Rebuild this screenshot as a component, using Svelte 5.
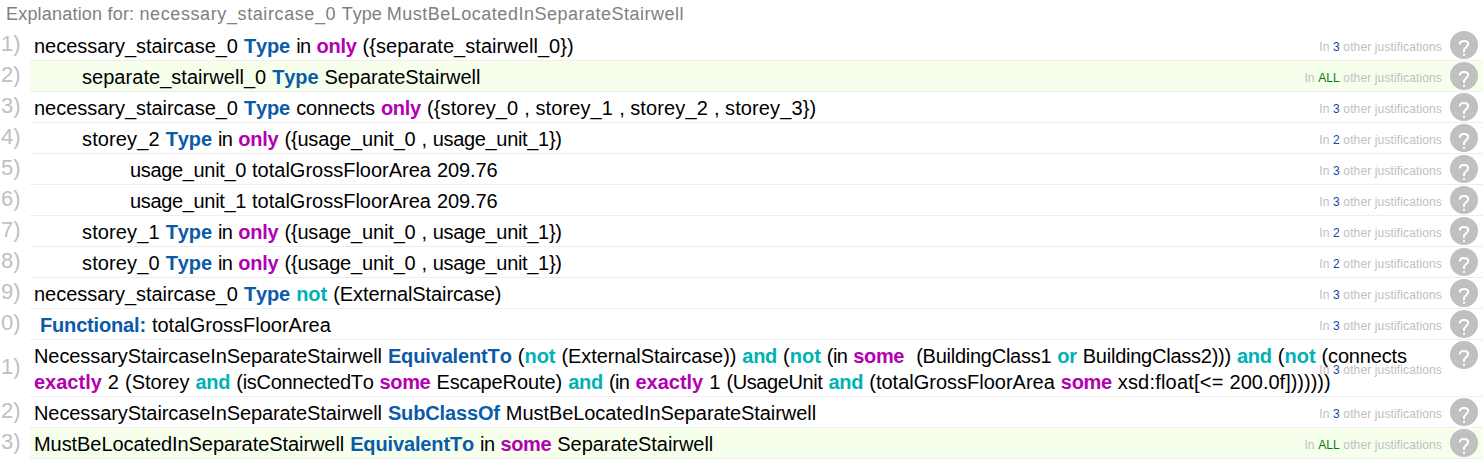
<script>
  const rows = [
    { n: '1)', indent: 0, lines: ['necessary_staircase_0 Type in only ({separate_stairwell_0})'], count: '3' },
    { n: '2)', indent: 1, lines: ['separate_stairwell_0 Type SeparateStairwell'], count: 'ALL' },
    { n: '3)', indent: 0, lines: ['necessary_staircase_0 Type connects only ({storey_0 , storey_1 , storey_2 , storey_3})'], count: '3' },
    { n: '4)', indent: 1, lines: ['storey_2 Type in only ({usage_unit_0 , usage_unit_1})'], count: '2' },
    { n: '5)', indent: 2, lines: ['usage_unit_0 totalGrossFloorArea 209.76'], count: '3' },
    { n: '6)', indent: 2, lines: ['usage_unit_1 totalGrossFloorArea 209.76'], count: '3' },
    { n: '7)', indent: 1, lines: ['storey_1 Type in only ({usage_unit_0 , usage_unit_1})'], count: '2' },
    { n: '8)', indent: 1, lines: ['storey_0 Type in only ({usage_unit_0 , usage_unit_1})'], count: '2' },
    { n: '9)', indent: 0, lines: ['necessary_staircase_0 Type not (ExternalStaircase)'], count: '3' },
    { n: '0)', indent: 0, lines: [' Functional: totalGrossFloorArea'], count: '3' },
    {
      n: '1)',
      indent: 0,
      lines: [
        'NecessaryStaircaseInSeparateStairwell EquivalentTo (not (ExternalStaircase)) and (not (in some  (BuildingClass1 or BuildingClass2))) and (not (connects',
        'exactly 2 (Storey and (isConnectedTo some EscapeRoute) and (in exactly 1 (UsageUnit and (totalGrossFloorArea some xsd:float[<= 200.0f]))))))'
      ],
      count: '3'
    },
    { n: '2)', indent: 0, lines: ['NecessaryStaircaseInSeparateStairwell SubClassOf MustBeLocatedInSeparateStairwell'], count: '3' },
    { n: '3)', indent: 0, lines: ['MustBeLocatedInSeparateStairwell EquivalentTo in some SeparateStairwell'], count: 'ALL' }
  ];

  const kinds = {
    Type: 'axiom', EquivalentTo: 'axiom', SubClassOf: 'axiom', 'Functional:': 'axiom',
    only: 'restriction', some: 'restriction', exactly: 'restriction',
    not: 'logic', and: 'logic', or: 'logic'
  };

  // Per-word tracking in px, keyed by the exact word or by the word without its brackets and index.
  const tracking = {
    necessary_staircase: -0.03, separate_stairwell: 0.04, storey: 0.13, usage_unit: -0.34, ',': -0.5,
    '({usage_unit_0': -0.16, 'usage_unit_1})': -0.32,
    Type: -0.12, in: -0.6, only: -0.27, connects: -0.16, some: -0.35, and: -0.25, or: -0.3,
    '209.76': -0.1, ExternalStaircase: -0.1, 'Functional:': -0.17, EquivalentTo: -0.14, SubClassOf: -0.14,
    NecessaryStaircaseInSeparateStairwell: -0.092, MustBeLocatedInSeparateStairwell: -0.07,
    SeparateStairwell: -0.05, BuildingClass1: -0.25, BuildingClass2: -0.24, isConnectedTo: -0.28,
    EscapeRoute: -0.08, UsageUnit: -0.4, 'xsd:float[<=': 0.2
  };
  const keyword = /(\b(?:Type|EquivalentTo|SubClassOf|only|some|exactly|not|and|or)\b|Functional:|\s+)/;
  const tokens = (line) =>
    line.split(keyword).filter(Boolean).map((text) => ({
      text,
      kind: kinds[text] ?? 'plain',
      track: tracking[text] ?? tracking[text.replace(/[(){}]|_\d/g, '')] ?? 0
    }));
</script>

<main>
  <h1><span class="lead">Explanation for:{' '}</span><span class="subject">necessary_staircase_0{' '}</span><span class="rel">Type{' '}</span><span class="object">MustBeLocatedInSeparateStairwell</span></h1>
  <ol>
    {#each rows as row}
      <li class:tall={row.lines.length > 1}>
        <span class="num">{row.n}</span>
        <div class="axiom-row indent-{row.indent}" class:all={row.count === 'ALL'}>
          <div class="text">
            {#each row.lines as line}
              <div class="line">{#each tokens(line) as t}<span class={t.kind} style:letter-spacing="{t.track}px">{t.text}</span>{/each}</div>
            {/each}
          </div>
          <div class="note">In <b class:every={row.count === 'ALL'}>{row.count}</b> other justifications</div>
          <svg class="help" viewBox="0 0 28 28" width="28" height="28" aria-hidden="true">
            <circle cx="14" cy="14" r="14" />
            <path d="M9.9 13.4V12.8C9.9 10.8 11.5 9.9 14 9.9S18.2 10.9 18.2 13C18.2 16.2 14 16.4 14 19.6V21" />
            <rect x="13" y="22.8" width="2" height="2" />
          </svg>
        </div>
      </li>
    {/each}
  </ol>
</main>

<style>
  :global(body) { background: #fff; overflow: hidden; }
  main { font-family: "Liberation Sans", Arial, sans-serif; font-kerning: none; height: 465px; overflow: hidden; }
  h1 { margin: 0; padding-left: 6px; height: 30px; font-size: 18px; line-height: 28px; font-weight: 400; color: #808080; white-space: pre; }
  .lead { letter-spacing: 0.2px; }
  .subject { letter-spacing: 0.6px; }
  .rel { letter-spacing: 0; }
  .object { letter-spacing: 0.5px; }
  ol { list-style: none; margin: 0; padding: 0; }
  li { display: grid; grid-template-columns: 30px 1fr; height: 31px; }
  li.tall { height: 57px; }
  .num { align-self: center; padding-left: 1px; font-size: 22px; line-height: 28px; padding-bottom: 3px; color: #c0c0c0; }
  .axiom-row { display: grid; grid-template-columns: 1fr 28px; box-sizing: border-box; border-bottom: 1px solid #eee; padding: 0 5px 0 4px; }
  .axiom-row.all { background: #f5ffeb; }
  .indent-1 .text { padding-left: 48px; }
  .indent-2 .text { padding-left: 96px; }
  .text, .note { grid-area: 1 / 1; }
  .text { padding-top: 3px; color: #000; white-space: pre; }
  .line { font-size: 20px; line-height: 26px; height: 26px; word-spacing: 0.44px; }
  .axiom, .restriction, .logic { font-weight: 700; }
  .axiom { color: #0a5ba8; }
  .restriction { color: #b200b2; }
  .logic { color: #00b2b2; }
  .note { justify-self: end; align-self: center; padding: 3px 8px 0 0; font-size: 12px; line-height: 14px; color: #c0c0c0; letter-spacing: 0.13px; white-space: pre; }
  .note b { font-weight: 400; color: #1446a0; }
  .note b.every { color: #007d14; }
  .help { grid-area: 1 / 2; margin-top: 1px; display: block; }
  .help circle { fill: #c0c0c0; }
  .help path { fill: none; stroke: #fff; stroke-width: 2; }
  .help rect { fill: #fff; }
</style>
